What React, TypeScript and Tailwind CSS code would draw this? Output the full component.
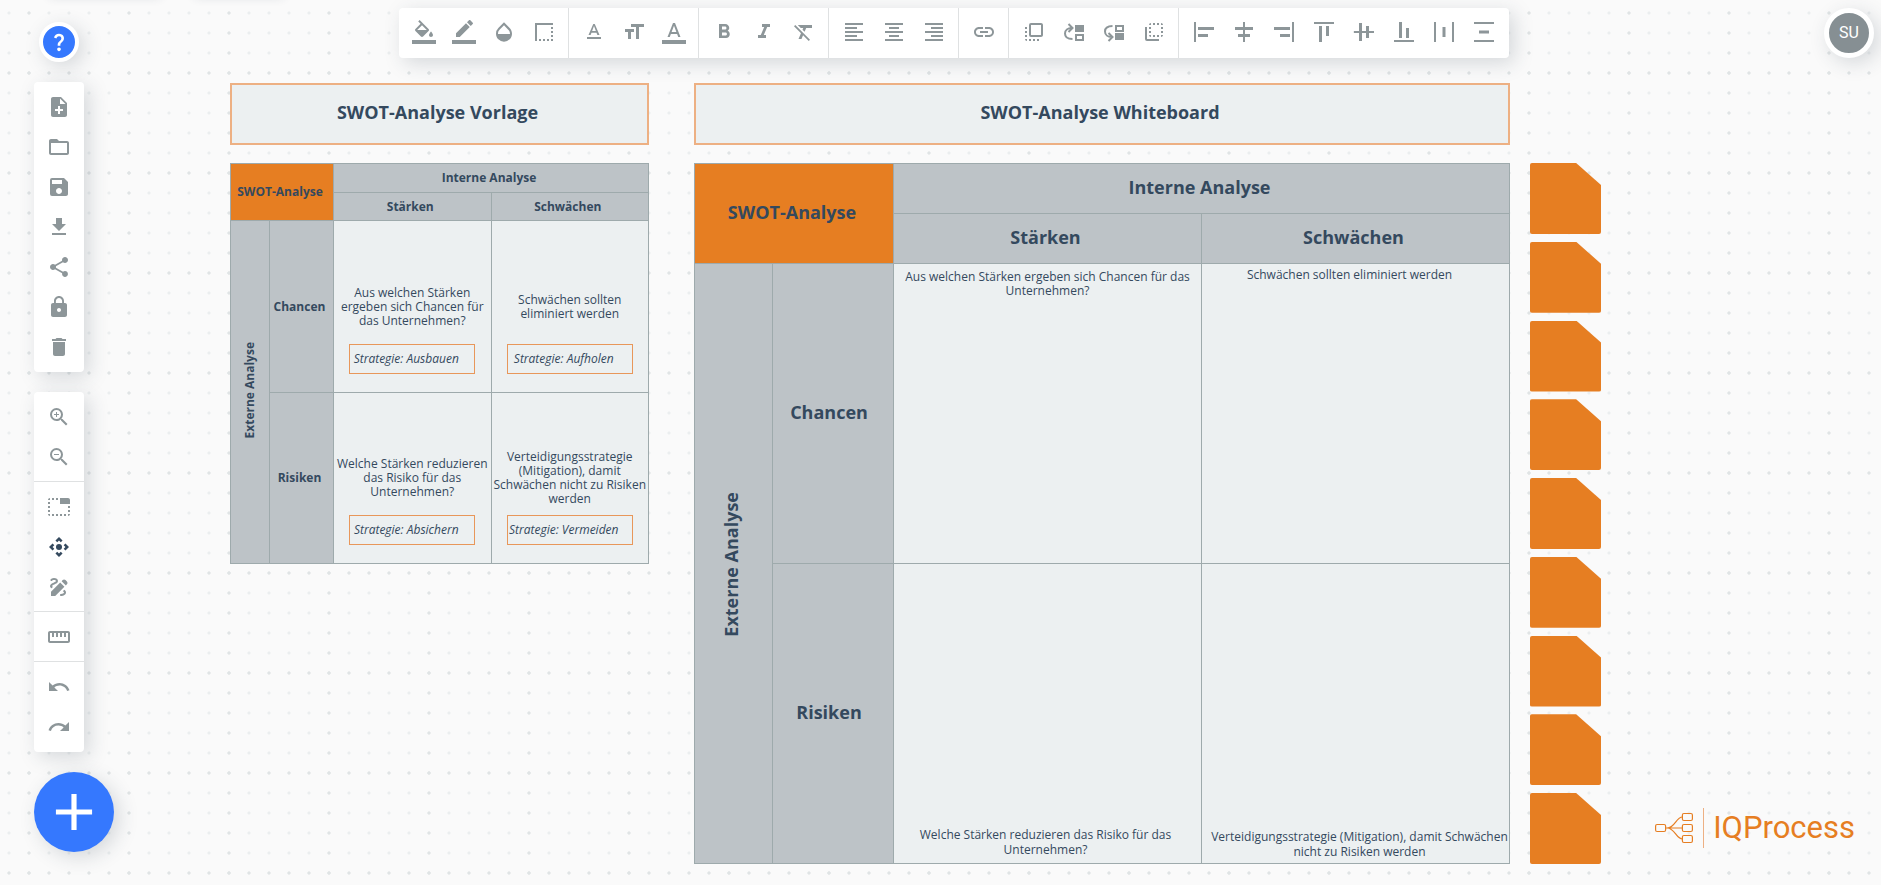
import type { CSSProperties, ElementType, ReactNode } from "react";
import {
  MdAdd,
  MdAlignHorizontalCenter,
  MdAlignHorizontalLeft,
  MdAlignHorizontalRight,
  MdAlignVerticalBottom,
  MdAlignVerticalCenter,
  MdAlignVerticalTop,
  MdBorderStyle,
  MdControlCamera,
  MdDelete,
  MdDraw,
  MdFileDownload,
  MdFlipToBack,
  MdFlipToFront,
  MdFolderOpen,
  MdFormatAlignCenter,
  MdFormatAlignLeft,
  MdFormatAlignRight,
  MdFormatBold,
  MdFormatClear,
  MdFormatItalic,
  MdFormatSize,
  MdHorizontalDistribute,
  MdLink,
  MdLock,
  MdNoteAdd,
  MdOpacity,
  MdQuestionMark,
  MdRedo,
  MdSave,
  MdShare,
  MdStraighten,
  MdTabUnselected,
  MdTextFormat,
  MdUndo,
  MdVerticalDistribute,
  MdZoomIn,
  MdZoomOut,
} from "react-icons/md";

type Tool = { label: string; icon: ElementType; active?: boolean };

function FillIcon({ className }: { className?: string }) {
  return (
    <svg viewBox="0 0 24 24" fill="currentColor" className={className}>
      <path d="M16.56 8.94 7.62 0 6.21 1.41l2.38 2.38-5.15 5.15a1.49 1.49 0 0 0 0 2.12l5.5 5.5c.29.29.68.44 1.06.44s.77-.15 1.06-.44l5.5-5.5c.59-.58.59-1.53 0-2.12zM5.21 10 10 5.21 14.79 10H5.21zM19 11.5s-2 2.17-2 3.5c0 1.1.9 2 2 2s2-.9 2-2c0-1.33-2-3.5-2-3.5z" />
      <path d="M0 20h24v4H0z" />
    </svg>
  );
}

function StrokeColorIcon({ className }: { className?: string }) {
  return (
    <svg viewBox="0 0 24 24" fill="currentColor" className={className}>
      <path d="M17.75 7 14 3.25l-10 10V17h3.75l10-10zm2.96-2.96a1 1 0 0 0 0-1.41L18.37.29a1 1 0 0 0-1.41 0L15 2.25 18.75 6l1.96-1.96z" />
      <path d="M0 20h24v4H0z" />
    </svg>
  );
}

function TextColorIcon({ className }: { className?: string }) {
  return (
    <svg viewBox="0 0 24 24" fill="currentColor" className={className}>
      <path d="M11 3 5.5 17h2.25l1.12-3h6.25l1.12 3h2.25L13 3h-2zm-1.38 9L12 5.67 14.38 12H9.62z" />
      <path d="M0 20h24v4H0z" />
    </svg>
  );
}

function ForwardIcon({ className }: { className?: string }) {
  return (
    <svg viewBox="0 0 24 24" fill="none" stroke="currentColor" strokeWidth="2" className={className}>
      <path d="M10.5 19C6 19 3 17 3 13.5S6 8 9.5 8M6.500 4 10.500 8 6.500 12" />
      <path d="M13 5h9v7h-9z" fill="currentColor" stroke="none" />
      <path d="M14 15h7v5h-7z" />
    </svg>
  );
}

function BackwardIcon({ className }: { className?: string }) {
  return (
    <svg viewBox="0 0 24 24" fill="none" stroke="currentColor" strokeWidth="2" className={className}>
      <path d="M10.500 6C6 6 3 8 3 11.500S6 17 9.500 17M6.500 13 10.500 17 6.500 21" />
      <path d="M13 13h9v7h-9z" fill="currentColor" stroke="none" />
      <path d="M14 6h7v5h-7z" />
    </svg>
  );
}

const formatTools: Tool[][] = [
  [
    { label: "Füllfarbe", icon: FillIcon },
    { label: "Linienfarbe", icon: StrokeColorIcon },
    { label: "Deckkraft", icon: MdOpacity },
    { label: "Rahmenstil", icon: MdBorderStyle },
  ],
  [
    { label: "Schriftart", icon: MdTextFormat },
    { label: "Schriftgröße", icon: MdFormatSize },
    { label: "Textfarbe", icon: TextColorIcon },
  ],
  [
    { label: "Fett", icon: MdFormatBold },
    { label: "Kursiv", icon: MdFormatItalic },
    { label: "Formatierung löschen", icon: MdFormatClear },
  ],
  [
    { label: "Text linksbündig", icon: MdFormatAlignLeft },
    { label: "Text zentriert", icon: MdFormatAlignCenter },
    { label: "Text rechtsbündig", icon: MdFormatAlignRight },
  ],
  [{ label: "Link", icon: MdLink }],
  [
    { label: "In den Vordergrund", icon: MdFlipToFront },
    { label: "Eine Ebene nach vorne", icon: ForwardIcon },
    { label: "Eine Ebene nach hinten", icon: BackwardIcon },
    { label: "In den Hintergrund", icon: MdFlipToBack },
  ],
  [
    { label: "Links ausrichten", icon: MdAlignHorizontalLeft },
    { label: "Horizontal zentrieren", icon: MdAlignHorizontalCenter },
    { label: "Rechts ausrichten", icon: MdAlignHorizontalRight },
    { label: "Oben ausrichten", icon: MdAlignVerticalTop },
    { label: "Vertikal zentrieren", icon: MdAlignVerticalCenter },
    { label: "Unten ausrichten", icon: MdAlignVerticalBottom },
    { label: "Horizontal verteilen", icon: MdHorizontalDistribute },
    { label: "Vertikal verteilen", icon: MdVerticalDistribute },
  ],
];

const fileTools: Tool[][] = [
  [
    { label: "Neu", icon: MdNoteAdd },
    { label: "Öffnen", icon: MdFolderOpen },
    { label: "Speichern", icon: MdSave },
    { label: "Herunterladen", icon: MdFileDownload },
    { label: "Teilen", icon: MdShare },
    { label: "Sperren", icon: MdLock },
    { label: "Löschen", icon: MdDelete },
  ],
];

const viewTools: Tool[][] = [
  [
    { label: "Vergrößern", icon: MdZoomIn },
    { label: "Verkleinern", icon: MdZoomOut },
  ],
  [
    { label: "Auswahl", icon: MdTabUnselected },
    { label: "Verschieben", icon: MdControlCamera, active: true },
    { label: "Zeichnen", icon: MdDraw },
  ],
  [{ label: "Lineal", icon: MdStraighten }],
  [
    { label: "Rückgängig", icon: MdUndo },
    { label: "Wiederholen", icon: MdRedo },
  ],
];

// Every fifth row and column of the dot grid is a little darker
const dot = (color: string) => `radial-gradient(circle at 10px 10px, ${color} 1px, transparent 2px)`;
const gridStyle: CSSProperties = {
  backgroundImage: [dot("#e0e4e5"), dot("#e0e4e5"), dot("#ebeeef")].join(", "),
  backgroundSize: "100px 20px, 20px 100px, 20px 20px",
  backgroundPosition: "19px 3px, -1px 63px, -1px 3px",
};

function ToolButton({ tool }: { tool: Tool }) {
  const Icon = tool.icon;
  return (
    <button
      type="button"
      aria-label={tool.label}
      className={`flex size-10 items-center justify-center ${tool.active ? "text-[#34495e]" : "text-[#8d9699]"}`}
    >
      <Icon className="size-6" />
    </button>
  );
}

function SideBar({ groups, className }: { groups: Tool[][]; className: string }) {
  return (
    <div className={`w-[50px] rounded bg-white shadow-[5px_5px_20px_rgba(44,62,80,0.18)] ${className}`}>
      {groups.map((group, i) => (
        <div
          key={i}
          className={`flex flex-col items-center pt-[5px] ${i < groups.length - 1 ? "border-b border-[#dfe1e2] pb-1" : "pb-[5px]"}`}
        >
          {group.map((tool) => (
            <ToolButton key={tool.label} tool={tool} />
          ))}
        </div>
      ))}
    </div>
  );
}

function TopBar() {
  return (
    <div className="flex h-[50px] rounded bg-white shadow-[5px_5px_20px_rgba(44,62,80,0.18)]">
      {formatTools.map((group, i) => (
        <div
          key={i}
          className={`flex items-start pt-1 pl-[5px] ${i < formatTools.length - 1 ? "border-r border-[#dfe1e2] pr-1" : "pr-[5px]"}`}
        >
          {group.map((tool) => (
            <ToolButton key={tool.label} tool={tool} />
          ))}
        </div>
      ))}
    </div>
  );
}

function BoardTitle({ children }: { children: ReactNode }) {
  return (
    <h2 className="mb-[18px] flex h-[62px] items-center justify-center border-2 border-[#edb083] bg-[#ecf0f1] pr-1 pb-1 text-lg font-bold">
      {children}
    </h2>
  );
}

const line = "border border-[#9eaaac]";
const head = `${line} bg-[#bdc3c7] font-bold`;
const corner = `${line} bg-[#e67e22] font-bold`;

function Vertical({ children }: { children: ReactNode }) {
  return <span className="inline-block rotate-180 [writing-mode:vertical-rl]">{children}</span>;
}

function TemplateCell({ text, strategy }: { text: string; strategy: string }) {
  return (
    <td className={`${line} bg-[#ecf0f1] p-0 align-bottom`}>
      <div className="flex flex-col items-center pb-[18px]">
        <p className="mb-2 flex min-h-[58px] items-center text-center">{text}</p>
        <div className="flex h-[30px] w-[126px] items-center justify-center border border-[#e8975a] pr-3 italic">
          {strategy}
        </div>
      </div>
    </td>
  );
}

function Template() {
  const pad = "pt-0 pr-1 pb-0 pl-0";
  return (
    <section>
      <BoardTitle>SWOT-Analyse Vorlage</BoardTitle>
      <table className="w-full table-fixed border-collapse text-xs leading-[14px]">
        <colgroup>
          <col className="w-[39px]" />
          <col className="w-16" />
          <col />
          <col />
        </colgroup>
        <tbody>
          <tr className="h-[29px]">
            <th colSpan={2} rowSpan={2} className={`${corner} ${pad}`}>
              SWOT-Analyse
            </th>
            <th colSpan={2} className={`${head} ${pad}`}>Interne Analyse</th>
          </tr>
          <tr className="h-7">
            <th className={`${head} ${pad}`}>Stärken</th>
            <th className={`${head} ${pad}`}>Schwächen</th>
          </tr>
          <tr className="h-[172px]">
            <th rowSpan={2} className={`${head} p-0`}>
              <Vertical>Externe Analyse</Vertical>
            </th>
            <th className={`${head} ${pad}`}>Chancen</th>
            <TemplateCell
              text="Aus welchen Stärken ergeben sich Chancen für das Unternehmen?"
              strategy="Strategie: Ausbauen"
            />
            <TemplateCell text="Schwächen sollten eliminiert werden" strategy="Strategie: Aufholen" />
          </tr>
          <tr className="h-[171px]">
            <th className={`${head} ${pad}`}>Risiken</th>
            <TemplateCell
              text="Welche Stärken reduzieren das Risiko für das Unternehmen?"
              strategy="Strategie: Absichern"
            />
            <TemplateCell
              text="Verteidigungsstrategie (Mitigation), damit Schwächen nicht zu Risiken werden"
              strategy="Strategie: Vermeiden"
            />
          </tr>
        </tbody>
      </table>
    </section>
  );
}

function Whiteboard() {
  const pad = "pt-0 pr-1 pb-1 pl-0";
  const cell = `${line} bg-[#ecf0f1] text-center text-xs`;
  return (
    <section>
      <BoardTitle>SWOT-Analyse Whiteboard</BoardTitle>
      <table className="w-full table-fixed border-collapse text-lg">
        <colgroup>
          <col className="w-[78px]" />
          <col className="w-[121px]" />
          <col />
          <col />
        </colgroup>
        <tbody>
          <tr className="h-[50px]">
            <th colSpan={2} rowSpan={2} className={`${corner} ${pad}`}>
              SWOT-Analyse
            </th>
            <th colSpan={2} className={`${head} ${pad}`}>Interne Analyse</th>
          </tr>
          <tr className="h-[50px]">
            <th className={`${head} ${pad}`}>Stärken</th>
            <th className={`${head} ${pad}`}>Schwächen</th>
          </tr>
          <tr className="h-[300px]">
            <th rowSpan={2} className={`${head} pt-2 pr-1.5 pb-0 pl-0`}>
              <Vertical>Externe Analyse</Vertical>
            </th>
            <th className={`${head} pt-0 pr-2 pb-1 pl-0`}>Chancen</th>
            <td className={`${cell} px-1 pt-1.5 align-top leading-[14px]`}>
              Aus welchen Stärken ergeben sich Chancen für das Unternehmen?
            </td>
            <td className={`${cell} pt-1 pr-4 pl-1 align-top leading-[14px]`}>Schwächen sollten eliminiert werden</td>
          </tr>
          <tr className="h-[300px]">
            <th className={`${head} pt-0 pr-2 pb-1 pl-0`}>Risiken</th>
            <td className={`${cell} pr-2 pb-1.5 pl-1 align-bottom leading-[15px]`}>
              Welche Stärken reduzieren das Risiko für das Unternehmen?
            </td>
            <td className={`${cell} pr-0 pb-1 pl-2 align-bottom leading-[15px]`}>
              Verteidigungsstrategie (Mitigation), damit Schwächen nicht zu Risiken werden
            </td>
          </tr>
        </tbody>
      </table>
    </section>
  );
}

function Notes() {
  return (
    <ul className="flex flex-col justify-between pt-20">
      {Array.from({ length: 9 }, (_, i) => (
        <li
          key={i}
          className="size-[71px] rounded-xs bg-[#e67e22] [clip-path:polygon(0_0,65%_0,100%_31%,100%_100%,0_100%)]"
        />
      ))}
    </ul>
  );
}

function Logo() {
  return (
    <div className="flex items-center text-[#e67e22]">
      <svg viewBox="0 0 38 32" fill="none" stroke="currentColor" strokeWidth="1.2" className="h-8 w-[38px]">
        <rect x="0.6" y="12.500" width="10" height="7" rx="1.500" />
        <rect x="27.400" y="1.500" width="10" height="7" rx="1.500" />
        <rect x="27.400" y="12.500" width="10" height="7" rx="1.500" />
        <rect x="27.400" y="23.500" width="10" height="7" rx="1.500" />
        <path d="M10.500 16h17M12 16c8 0 9-11 15.500-11M12 16c8 0 9 11 15.500 11" />
      </svg>
      <div className="ml-[10px] h-10 w-px bg-[#edb083]" />
      <span className="ml-[9px] font-[Roboto,sans-serif] text-[31px] leading-10">IQProcess</span>
    </div>
  );
}

export default function App() {
  return (
    <div
      style={gridStyle}
      className="relative flex min-h-screen overflow-hidden bg-[#fafafa] font-['Open_Sans',sans-serif] text-[#34495e]"
    >
      {/* collapsed menu panels, only their shadow reaches the page */}
      <div className="absolute -top-10 left-[50px] h-9 w-[110px] shadow-[0_0_10px_rgba(44,62,80,0.2)]" />
      <div className="absolute -top-10 left-[195px] h-9 w-[88px] shadow-[0_0_10px_rgba(44,62,80,0.2)]" />

      <aside className="ml-[34px] w-20 shrink-0 pt-[22px]">
        <button
          type="button"
          aria-label="Hilfe"
          className="ml-[5px] flex size-10 items-center justify-center rounded-full border-4 border-white bg-[#3578fe] text-white shadow-[5px_5px_20px_rgba(44,62,80,0.18)]"
        >
          <MdQuestionMark className="size-[22px]" />
        </button>
        <SideBar groups={fileTools} className="mt-5" />
        <SideBar groups={viewTools} className="mt-5" />
        <button
          type="button"
          aria-label="Hinzufügen"
          className="mt-5 flex size-20 items-center justify-center rounded-full bg-[#3578fe] text-white shadow-[5px_5px_20px_rgba(44,62,80,0.18)]"
        >
          <MdAdd className="size-[62px]" />
        </button>
      </aside>

      <main className="ml-[116px] flex-1 pt-2">
        <div className="flex justify-center pl-[76px]">
          <TopBar />
        </div>
        <div className="mt-[25px] grid grid-cols-[419fr_45px_816fr_20px_71px]">
          <Template />
          <div />
          <Whiteboard />
          <div />
          <Notes />
        </div>
      </main>

      <div className="flex w-[280px] shrink-0 flex-col items-end justify-between pt-2 pb-[37px]">
        <button
          type="button"
          aria-label="Benutzerkonto"
          className="mr-[7px] flex size-[50px] items-center justify-center rounded-full border-[5px] border-white bg-[#868f93] font-[Roboto,sans-serif] text-base text-white shadow-[5px_5px_20px_rgba(44,62,80,0.18)]"
        >
          SU
        </button>
        <div className="mr-[26px]">
          <Logo />
        </div>
      </div>
    </div>
  );
}
